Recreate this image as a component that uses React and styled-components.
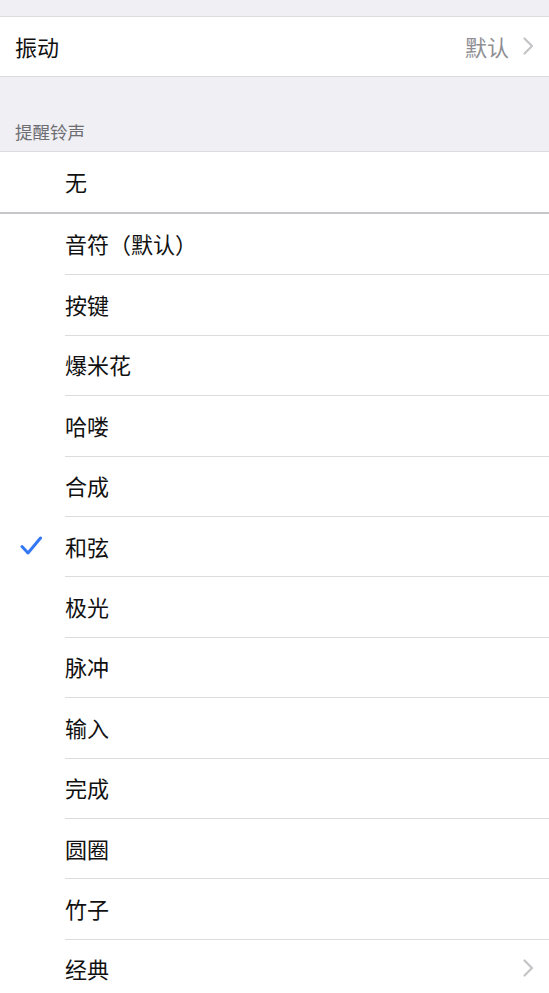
import React from "react";
import styled, { createGlobalStyle } from "styled-components";

const Global = createGlobalStyle`
  html, body { margin: 0; padding: 0; background: #efeff4; }
  body { font-family: "Noto Sans CJK SC", "Noto Sans", sans-serif; -webkit-font-smoothing: antialiased; }
  * { box-sizing: border-box; }
`;

const Page = styled.div`
  width: 549px;
  height: 993px;
  overflow: hidden;
  background: #efeff4;
  display: flex;
  flex-direction: column;
`;

const TopGap = styled.div`
  height: 17px;
  flex-shrink: 0;
  border-bottom: 1px solid #dcdce0;
`;

const SettingRow = styled.div`
  height: 60px;
  flex-shrink: 0;
  background: #fff;
  border-bottom: 1px solid #dcdce0;
  display: flex;
  align-items: center;
  padding: 0 15px 2px 15px;
`;

const Label = styled.span`
  font-size: 22px;
  color: #111;
  flex: 1;
  line-height: 1;
`;

const Value = styled.span`
  font-size: 22px;
  color: #8e8e93;
  line-height: 1;
  margin-right: 14px;
`;

const SectionHeader = styled.div`
  height: 75px;
  flex-shrink: 0;
  display: flex;
  align-items: flex-end;
  padding: 0 15px 11px;
  font-size: 17.5px;
  color: #6e6e72;
  border-bottom: 1px solid #dcdce0;
  line-height: 1;
`;

const NoneRow = styled.div`
  height: 62px;
  flex-shrink: 0;
  background: #fff;
  border-bottom: 2.5px solid #c6c6ca;
  display: flex;
  align-items: center;
  padding-left: 65px;
  padding-bottom: 2px;
`;

const List = styled.div`
  background: #fff;
  display: flex;
  flex-direction: column;
  flex: 1;
`;

const ToneRow = styled.div`
  height: 60.4px;
  flex-shrink: 0;
  display: flex;
  align-items: stretch;
`;

const CheckCell = styled.div`
  width: 65px;
  flex-shrink: 0;
  display: flex;
  align-items: center;
  justify-content: flex-start;
  padding-left: 20px;
`;

const ToneContent = styled.div`
  flex: 1;
  display: flex;
  align-items: center;
  padding-right: 15px;
  padding-bottom: 2px;
  border-top: ${(p) => (p.$first ? "none" : "1px solid #dcdce0")};
`;

const Chevron = ({ color = "#c4c4c8" }) => (
  <svg width="11" height="18" viewBox="0 0 11 18" fill="none">
    <path d="M1.5 1.5 L9 9 L1.5 16.5" stroke={color} strokeWidth="2.2" strokeLinecap="round" strokeLinejoin="round" />
  </svg>
);

const Check = () => (
  <svg width="22" height="20" viewBox="0 0 22 20" fill="none">
    <path d="M2 10.5 L8 17 L20.5 2" stroke="#3478f6" strokeWidth="3" strokeLinecap="round" strokeLinejoin="round" />
  </svg>
);

const tones = [
  "音符（默认）",
  "按键",
  "爆米花",
  "哈喽",
  "合成",
  "和弦",
  "极光",
  "脉冲",
  "输入",
  "完成",
  "圆圈",
  "竹子",
  "经典",
];

export default function App() {
  return (
    <Page>
      <Global />
      <TopGap />
      <SettingRow>
        <Label>振动</Label>
        <Value>默认</Value>
        <Chevron />
      </SettingRow>
      <SectionHeader>提醒铃声</SectionHeader>
      <NoneRow>
        <Label>无</Label>
      </NoneRow>
      <List>
        {tones.map((t, i) => (
          <ToneRow key={t}>
            <CheckCell>{t === "和弦" ? <Check /> : null}</CheckCell>
            <ToneContent $first={i === 0}>
              <Label>{t}</Label>
              {t === "经典" ? <Chevron /> : null}
            </ToneContent>
          </ToneRow>
        ))}
      </List>
    </Page>
  );
}
